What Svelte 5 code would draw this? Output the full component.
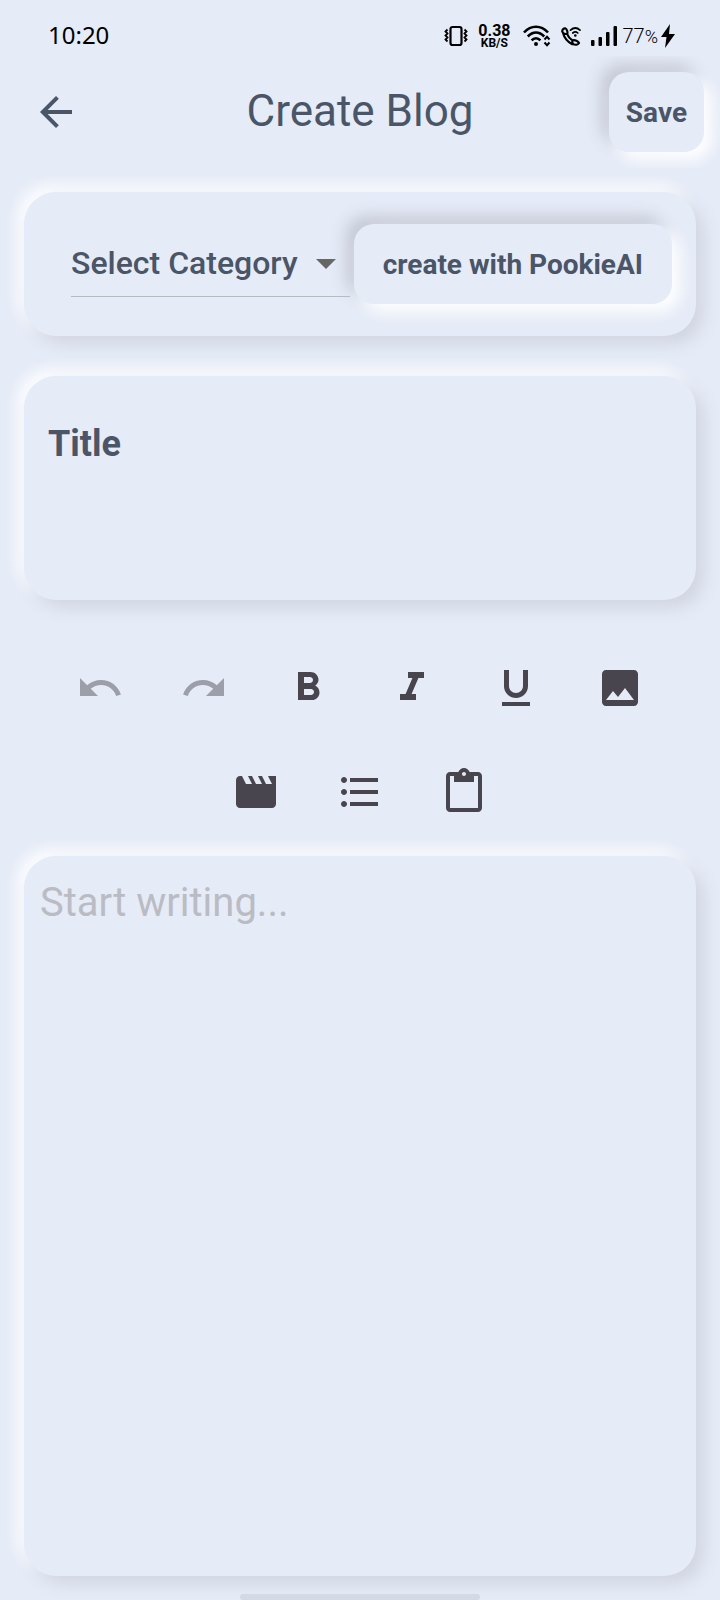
<script>
  let category = $state('');
  let title = $state('');
  let body = $state('');

  const rows = [
    [
      { name: 'Undo', off: true, d: 'M12.5 8c-2.65 0-5.05.99-6.9 2.6L2 7v9h9l-3.62-3.62c1.39-1.16 3.16-1.88 5.12-1.88 3.54 0 6.55 2.31 7.6 5.5l2.37-.78C21.08 11.03 17.15 8 12.5 8z' },
      { name: 'Redo', off: true, d: 'M18.4 10.6C16.55 8.99 14.15 8 11.5 8c-4.65 0-8.58 3.03-9.96 7.22L3.9 16c1.05-3.19 4.05-5.5 7.6-5.5 1.95 0 3.73.72 5.12 1.88L13 16h9V7l-3.6 3.6z' },
      { name: 'Bold', d: 'M15.6 10.79c.97-.67 1.65-1.77 1.65-2.79 0-2.26-1.75-4-4-4H7v14h7.04c2.09 0 3.71-1.7 3.71-3.79 0-1.52-.86-2.82-2.15-3.42zM10 6.5h3c.83 0 1.5.67 1.5 1.5s-.67 1.5-1.5 1.5h-3v-3zm3.5 9H10v-3h3.5c.83 0 1.5.67 1.5 1.5s-.67 1.5-1.5 1.5z' },
      { name: 'Italic', d: 'M10 4v3h2.21l-3.42 8H6v3h8v-3h-2.21l3.42-8H18V4z' },
      { name: 'Underline', d: 'M12 17c3.31 0 6-2.69 6-6V3h-2.5v8c0 1.93-1.57 3.5-3.5 3.5S8.5 12.93 8.5 11V3H6v8c0 3.31 2.69 6 6 6zm-7 2v2h14v-2H5z' },
      { name: 'Insert image', d: 'M21 19V5c0-1.1-.9-2-2-2H5c-1.1 0-2 .9-2 2v14c0 1.1.9 2 2 2h14c1.1 0 2-.9 2-2zM8.5 13.5l2.5 3.01L14.5 12l4.5 6H5l3.5-4.5z' }
    ],
    [
      { name: 'Insert video', d: 'M18 4l2 4h-3l-2-4h-2l2 4h-3l-2-4H8l2 4H7L5 4H4c-1.1 0-1.99.9-1.99 2L2 18c0 1.1.9 2 2 2h16c1.1 0 2-.9 2-2V4h-4z' },
      { name: 'Bulleted list', d: 'M4 10.5c-.83 0-1.5.67-1.5 1.5s.67 1.5 1.5 1.5 1.5-.67 1.5-1.5-.67-1.5-1.5-1.5zm0-6c-.83 0-1.5.67-1.5 1.5S3.17 7.5 4 7.5 5.5 6.83 5.5 6 4.83 4.5 4 4.5zm0 12c-.83 0-1.5.68-1.5 1.5s.68 1.5 1.5 1.5 1.5-.68 1.5-1.5-.67-1.5-1.5-1.5zM7 19h14v-2H7v2zm0-6h14v-2H7v2zm0-8v2h14V5H7z' },
      { name: 'Paste', d: 'M19 2h-4.18C14.4.84 13.3 0 12 0c-1.3 0-2.4.84-2.82 2H5c-1.1 0-2 .9-2 2v16c0 1.1.9 2 2 2h14c1.1 0 2-.9 2-2V4c0-1.1-.9-2-2-2zm-7 0c.55 0 1 .45 1 1s-.45 1-1 1-1-.45-1-1 .45-1 1-1zm7 18H5V4h2v3h10V4h2v16z' }
    ]
  ];
</script>

<div class="screen">
  <div class="status">
    <span class="clock">10:20</span>
    <div class="tray">
      <svg width="24" height="22" viewBox="0 0 24 22" fill="none" stroke="#000" stroke-width="2.2">
        <rect x="6.5" y="2" width="11" height="18" rx="2" />
        <path d="M3.5 4.5l-2 2 2 2-2 2 2 2-2 2 2 2M20.5 4.5l2 2-2 2 2 2-2 2 2 2-2 2" stroke-width="1.8" />
      </svg>
      <span class="rate"><b>0.38</b><small>KB/S</small></span>
      <svg width="28" height="22" viewBox="0 0 28 22" fill="none" stroke="#000" stroke-width="2.6">
        <path d="M1 7.5C8-.2 18-.2 25 7.5M4.8 11.5c5-5.3 11.4-5.3 16.4 0M8.6 15.3c2.6-2.8 6.2-2.8 8.8 0" />
        <circle cx="13" cy="19" r="2" fill="#000" stroke="none" />
        <path d="M21.5 14.5l2.5-2.7 2.5 2.7M21.5 17.5l2.5 2.7 2.5-2.7" stroke-width="2" />
      </svg>
      <svg width="20" height="20" viewBox="0 0 20 20" fill="none" stroke="#000" stroke-width="2.2" stroke-linejoin="round" stroke-linecap="round">
        <path d="M6.2 7.8C4.6 8.2 2 7.600 1.300 5.600 1 3.600 2.600 2.200 4.200 2.300 6 3 6.900 6.300 6.200 7.800zM2 7c1.200 4.400 4.400 8.800 9.200 11.200M11.600 14.400c-.5 1.500-.3 3 .8 3.900 2 .8 4.700.3 5.600-1.300-.8-1.700-4-3.400-6.400-2.600zM6.200 8.200c1 2.700 2.700 4.800 5.200 6.200" />
        <path d="M9.500 4.200c3-2.700 6.700-2.700 9.500 0M11.800 7c1.600-1.400 3.500-1.400 5 0" stroke-width="1.7" />
        <circle cx="14.300" cy="9.500" r="1.300" fill="#000" stroke="none" />
      </svg>
      <svg width="26" height="22" viewBox="0 0 26 22">
        <rect x="0" y="15" width="3.5" height="6" rx="1" />
        <rect x="7.5" y="12" width="3.5" height="9" rx="1" />
        <rect x="15" y="7" width="3.5" height="14" rx="1" />
        <rect x="22.5" y="1" width="3.5" height="20" rx="1" />
      </svg>
      <span class="charge">77<small>%</small>
        <svg width="14" height="24" viewBox="0 0 14 24"><path d="M9 0L0 13h5.5L4 24l10-14H8z" /></svg>
      </span>
    </div>
  </div>

  <header>
    <button class="back" aria-label="Back">
      <svg width="48" height="48" viewBox="0 0 24 24"><path d="M20 11H7.83l5.59-5.59L12 4l-8 8 8 8 1.41-1.41L7.83 13H20v-2z" /></svg>
    </button>
    <h1>Create Blog</h1>
    <button class="raised save">Save</button>
  </header>

  <main>
    <section class="card source">
      <div class="picker">
        <select aria-label="Category" bind:value={category}>
          <option value="">Select Category</option>
        </select>
        <svg width="20" height="10" viewBox="0 0 20 10" aria-hidden="true"><path d="M0 0h20L10 10z" /></svg>
      </div>
      <button class="raised ai">create with PookieAI</button>
    </section>

    <textarea class="card title" aria-label="Title" placeholder="Title" bind:value={title}></textarea>

    <div class="tools" role="toolbar" aria-label="Formatting">
      {#each rows as row}
        <div class="line">
          {#each row as tool}
            <button class="tool" aria-label={tool.name} disabled={tool.off}>
              <svg width="48" height="48" viewBox="0 0 24 24"><path d={tool.d} /></svg>
            </button>
          {/each}
        </div>
      {/each}
    </div>

    <textarea class="card editor" aria-label="Blog text" placeholder="Start writing..." bind:value={body}></textarea>
  </main>

  <div class="home"></div>
</div>

<style>
  :global(body) {
    background: #e5ebf7;
  }
  .screen {
    --ink: #4a5568;
    --face: #e5ebf7;
    min-height: 100vh;
    display: flex;
    flex-direction: column;
    box-sizing: border-box;
    overflow: hidden;
    background: var(--face);
    color: var(--ink);
    font-family: Roboto, sans-serif;
  }
  button,
  select,
  textarea {
    font: inherit;
    color: inherit;
    border: 0;
    margin: 0;
    padding: 0;
    background: none;
    box-sizing: border-box;
    outline: none;
  }
  svg {
    display: block;
    flex: none;
  }
  .status {
    height: 56px;
    padding: 16px 45px 0 48px;
    box-sizing: border-box;
    display: flex;
    justify-content: space-between;
    color: #000;
  }
  .clock {
    font: 24px/38px 'Noto Sans', sans-serif;
  }
  .tray {
    display: flex;
    align-items: center;
    height: 40px;
    gap: 10px;
  }
  .rate {
    display: flex;
    flex-direction: column;
    align-items: center;
    margin-right: 2px;
    font-size: 16px;
    line-height: 14px;
  }
  .rate small {
    font-size: 12px;
    line-height: 10px;
    font-weight: 700;
  }
  .charge {
    display: flex;
    align-items: center;
    margin-left: -4px;
    font-size: 20px;
    font-weight: 300;
  }
  .charge small {
    font-size: 18px;
    margin-right: 3px;
  }
  header {
    height: 112px;
    padding: 0 16px;
    display: grid;
    grid-template-columns: 1fr auto 1fr;
    align-items: center;
    overflow: hidden;
  }
  .back {
    justify-self: start;
    padding: 16px;
  }
  .back svg {
    fill: var(--ink);
  }
  h1 {
    margin: 0;
    padding-bottom: 2px;
    font-size: 44px;
    line-height: 56px;
    font-weight: 400;
  }
  .raised {
    height: 80px;
    border-radius: 20px;
    background: var(--face);
    font-size: 28px;
    font-weight: 700;
    white-space: nowrap;
    box-shadow: 8px 8px 16px #fff, -8px -8px 16px #c4c8d4;
  }
  .save {
    justify-self: end;
    padding: 0 17px;
  }
  main {
    flex: 1;
    display: flex;
    flex-direction: column;
    padding: 24px 24px 0;
  }
  .card {
    border-radius: 32px;
    background: var(--face);
    box-shadow: 8px 8px 16px #d1d5e1, -6px -6px 16px #fff;
  }
  .source {
    display: flex;
    align-items: center;
    gap: 4px;
    height: 144px;
    padding: 0 24px 0 47px;
    box-sizing: border-box;
  }
  .picker {
    flex: 1;
    min-width: 0;
    display: flex;
    align-items: center;
    padding-right: 14px;
    border-bottom: 1px solid #b8bac2;
  }
  .picker select {
    flex: 1;
    min-width: 0;
    height: 64px;
    padding-bottom: 2px;
    appearance: none;
    font-size: 32px;
    font-weight: 500;
  }
  .picker svg {
    fill: #666;
  }
  .ai {
    padding: 0 29px;
  }
  textarea {
    display: block;
    width: 100%;
    resize: none;
  }
  .title {
    height: 224px;
    margin-top: 40px;
    padding: 44px 24px;
    font-size: 36px;
    line-height: 48px;
    font-weight: 700;
  }
  .title::placeholder {
    color: var(--ink);
    opacity: 1;
  }
  .tools {
    display: flex;
    flex-direction: column;
    gap: 8px;
    margin: 40px 0 16px;
  }
  .line {
    display: flex;
    justify-content: center;
    gap: 8px;
  }
  .tool {
    padding: 24px;
  }
  .tool svg {
    fill: #49454f;
  }
  .tool:disabled svg {
    fill: #9c9fa9;
  }
  .editor {
    flex: 1;
    min-height: 320px;
    padding: 23px 16px;
    font-size: 40px;
    line-height: 48px;
  }
  .editor::placeholder {
    color: #bbbcc3;
    opacity: 1;
  }
  .home {
    width: 33.333%;
    height: 6px;
    margin: 18px auto 0;
    border-radius: 3px;
    background: #d5d9e5;
    z-index: 1;
  }
</style>
